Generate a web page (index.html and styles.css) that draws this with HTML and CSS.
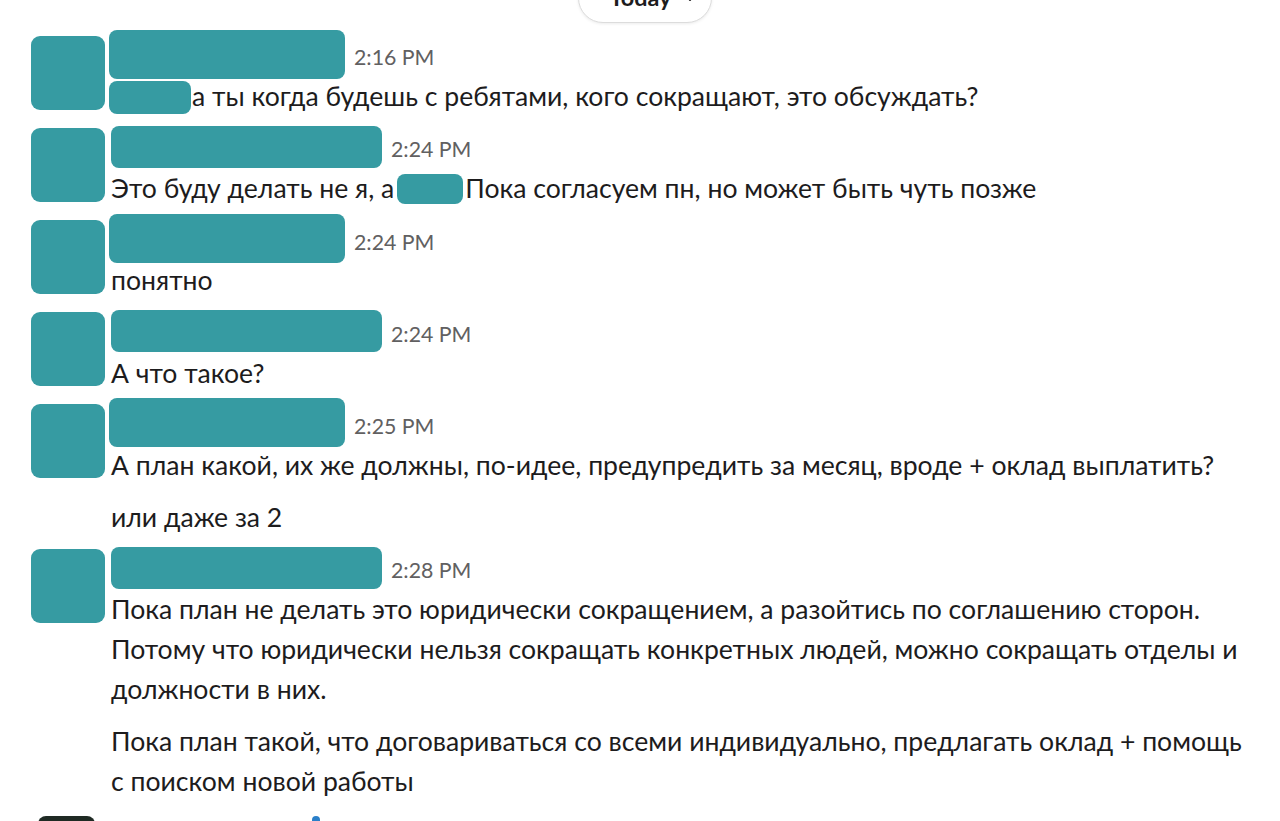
FILE: index.html
```html
<!DOCTYPE html>
<html lang="ru">
<head>
<meta charset="utf-8">
<title>Chat</title>
<link rel="stylesheet" href="styles.css">
</head>
<body>
<div class="pane">
  <div class="day-divider">
    <div class="day-pill">
      <span class="day-label">Today</span>
      <svg class="chev" width="12" height="12" viewBox="0 0 12 12"><polyline points="2,4 6,8 10,4" fill="none" stroke="#1d1c1d" stroke-width="1.8" stroke-linecap="round" stroke-linejoin="round"/></svg>
    </div>
  </div>

  <div class="msg">
    <div class="avatar redact"></div>
    <div class="msg-body">
      <div class="msg-head"><span class="name redact narrow"></span><span class="ts">2:16 PM</span></div>
      <div class="msg-text"><span class="redact mention-a"></span>а ты когда будешь с ребятами, кого сокращают, это обсуждать?</div>
    </div>
  </div>

  <div class="msg">
    <div class="avatar redact"></div>
    <div class="msg-body">
      <div class="msg-head"><span class="name redact wide"></span><span class="ts">2:24 PM</span></div>
      <div class="msg-text">Это буду делать не я, а<span class="redact mention-b"></span>Пока согласуем пн, но может быть чуть позже</div>
    </div>
  </div>

  <div class="msg">
    <div class="avatar redact"></div>
    <div class="msg-body">
      <div class="msg-head"><span class="name redact narrow"></span><span class="ts">2:24 PM</span></div>
      <div class="msg-text">понятно</div>
    </div>
  </div>

  <div class="msg">
    <div class="avatar redact"></div>
    <div class="msg-body">
      <div class="msg-head"><span class="name redact wide"></span><span class="ts">2:24 PM</span></div>
      <div class="msg-text">А что такое?</div>
    </div>
  </div>

  <div class="msg">
    <div class="avatar redact"></div>
    <div class="msg-body">
      <div class="msg-head"><span class="name redact narrow"></span><span class="ts">2:25 PM</span></div>
      <div class="msg-text">А план какой, их же должны, по-идее, предупредить за месяц, вроде + оклад выплатить?</div>
    </div>
  </div>

  <div class="msg cont">
    <div class="gutter"></div>
    <div class="msg-body">
      <div class="msg-text">или даже за 2</div>
    </div>
  </div>

  <div class="msg">
    <div class="avatar redact"></div>
    <div class="msg-body">
      <div class="msg-head"><span class="name redact wide"></span><span class="ts">2:28 PM</span></div>
      <div class="msg-text">Пока план не делать это юридически сокращением, а разойтись по соглашению сторон. Потому что юридически нельзя сокращать конкретных людей, можно сокращать отделы и должности в них.</div>
    </div>
  </div>

  <div class="msg cont">
    <div class="gutter"></div>
    <div class="msg-body">
      <div class="msg-text">Пока план такой, что договариваться со всеми индивидуально, предлагать оклад + помощь с поиском новой работы</div>
    </div>
  </div>

  <div class="msg next">
    <div class="avatar photo"></div>
    <div class="msg-body">
      <div class="msg-head"><span class="next-name"></span><span class="status-dot"></span></div>
    </div>
  </div>
</div>
</body>
</html>
```

FILE: styles.css
```css
html, body {
  margin: 0;
  padding: 0;
  background: #ffffff;
}

body {
  font-family: Lato, "Noto Sans", "Liberation Sans", sans-serif;
  color: #1d1c1d;
  overflow: hidden;
}

.pane {
  height: 821px;
  overflow: hidden;
  padding: 0 22px 0 31px;
  box-sizing: border-box;
}

.day-divider {
  display: flex;
  justify-content: center;
  margin-top: -27px;
  margin-bottom: 5.75px;
}

.day-pill {
  height: 50px;
  width: 134px;
  box-sizing: border-box;
  border: 1px solid #dcdcdc;
  border-radius: 25px;
  background: #ffffff;
  box-shadow: 0 1px 3px rgba(0, 0, 0, 0.08);
  display: flex;
  align-items: center;
  padding: 0 0 0 31px;
  gap: 13px;
}

.day-label {
  font-weight: 700;
  font-size: 23.4px;
  line-height: 1;
}

.chev {
  flex-shrink: 0;
}

.redact {
  background: #369ba2;
  border-radius: 8px;
}

.msg {
  display: flex;
  align-items: flex-start;
  padding: 7px 0 4px;
}

.msg.cont {
  padding: 9px 0 4px;
}

.avatar {
  flex-shrink: 0;
  width: 74px;
  height: 74px;
  margin-right: 6px;
  border-radius: 9px;
}

.gutter {
  flex-shrink: 0;
  width: 80px;
}

.msg-body {
  flex: 1;
  min-width: 0;
}

.msg-head {
  height: 41.5px;
  display: flex;
  align-items: center;
}

.name {
  display: block;
  flex-shrink: 0;
}

.name.narrow {
  width: 236px;
  height: 49px;
  margin-left: -2px;
  margin-top: -4px;
}

.name.wide {
  width: 271px;
  height: 42px;
  margin-top: -4px;
}

.ts {
  margin-left: 9px;
  margin-top: 3px;
  font-size: 21.3px;
  line-height: 1;
  color: #616061;
}

.msg-text {
  font-size: 26.6px;
  line-height: 39.6px;
}

.mention-a {
  display: inline-block;
  width: 82px;
  height: 33px;
  margin-left: -2px;
  margin-right: 1px;
  vertical-align: -8px;
}

.mention-b {
  display: inline-block;
  width: 66px;
  height: 30px;
  margin: 0 2px 0 3px;
  vertical-align: -6px;
}

.msg.next .avatar.photo {
  width: 57px;
  height: 57px;
  margin-left: 7px;
  margin-right: 17px;
  background: #1f2a24;
  border-radius: 8px;
  margin-top: 4px;
}

.next-name {
  display: block;
  width: 200px;
}

.status-dot {
  display: block;
  width: 8px;
  height: 10px;
  border-radius: 4px 4px 2px 2px;
  background: #2a7fc9;
  margin-top: 4px;
  align-self: flex-start;
}
```
